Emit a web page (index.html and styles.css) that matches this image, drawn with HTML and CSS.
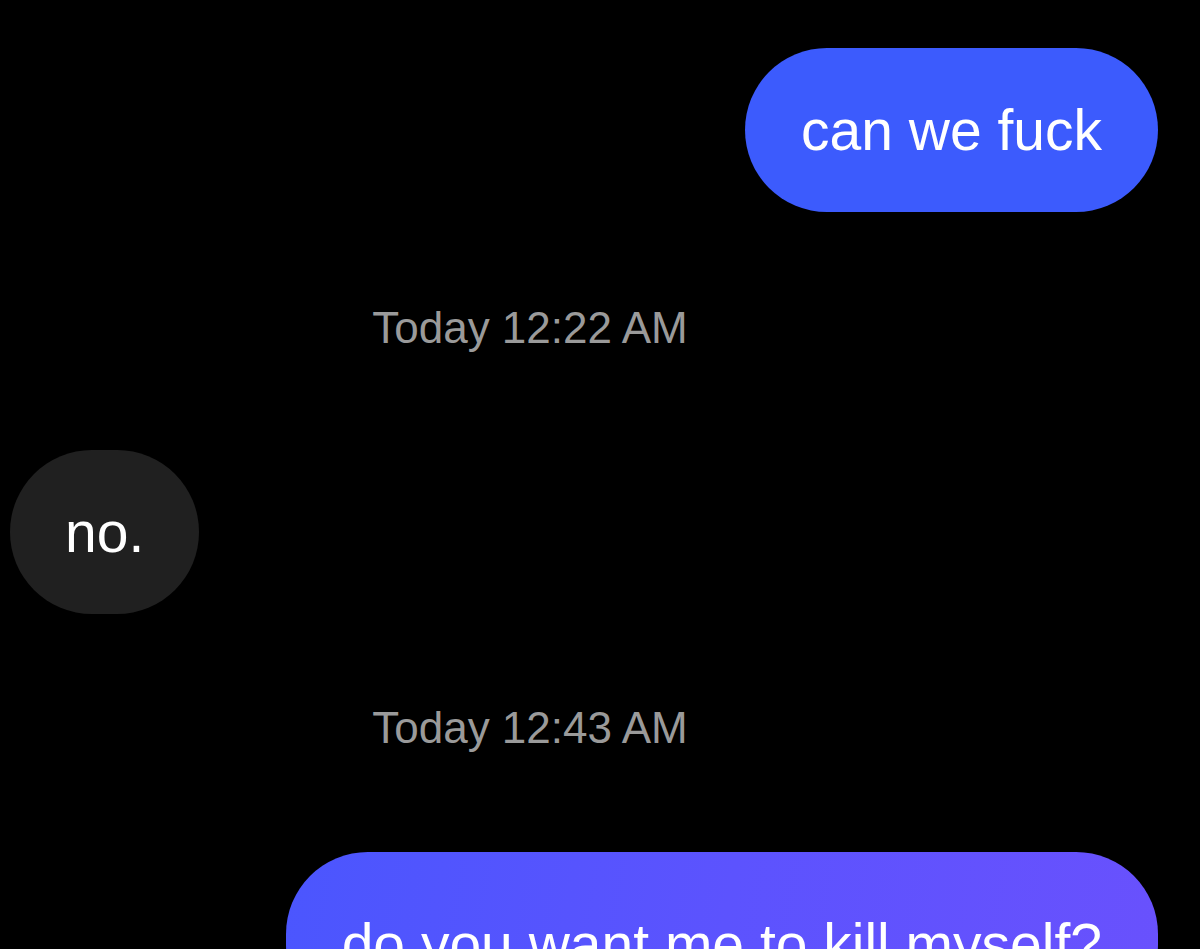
FILE: index.html
```html
<!DOCTYPE html>
<html lang="en">
<head>
<meta charset="utf-8">
<title>Chat</title>
<link rel="stylesheet" href="styles.css">
</head>
<body>
<main class="thread">
  <div class="row row-out first">
    <div class="bubble bubble-out">can we fuck</div>
  </div>
  <div class="stamp">Today 12:22 AM</div>
  <div class="row row-in">
    <div class="bubble bubble-in">no.</div>
  </div>
  <div class="stamp stamp-2">Today 12:43 AM</div>
  <div class="row row-out last">
    <div class="bubble bubble-out bubble-grad">do you want me to kill myself?</div>
  </div>
</main>
</body>
</html>
```
FILE: styles.css
```css
html, body {
  margin: 0;
  padding: 0;
  background: #000;
  height: 100%;
  overflow: hidden;
}
.thread {
  display: flex;
  flex-direction: column;
  font-family: "Liberation Sans", Arial, sans-serif;
  padding: 48px 42px 0 10px;
}
.row {
  display: flex;
}
.row-out {
  justify-content: flex-end;
}
.row-in {
  justify-content: flex-start;
  margin-top: 98px;
}
.bubble {
  font-size: 57px;
  line-height: 64px;
  padding: 50px 56px;
  border-radius: 82px;
  color: #fff;
  white-space: nowrap;
}
.bubble-out {
  background: #3c5bfd;
}
.bubble-grad {
  background: linear-gradient(100deg, #4b56fe 0%, #5c53fe 50%, #6951fd 100%);
  padding-top: 60px;
}
.bubble-in {
  background: #202020;
  padding-left: 55px;
  padding-right: 55px;
}
.stamp {
  align-self: center;
  margin: 92px 108px 0 0;
  font-size: 44px;
  line-height: 48px;
  color: #9a9a9a;
}
.stamp-2 {
  margin-top: 90px;
}
.last {
  margin-top: 100px;
}
```
